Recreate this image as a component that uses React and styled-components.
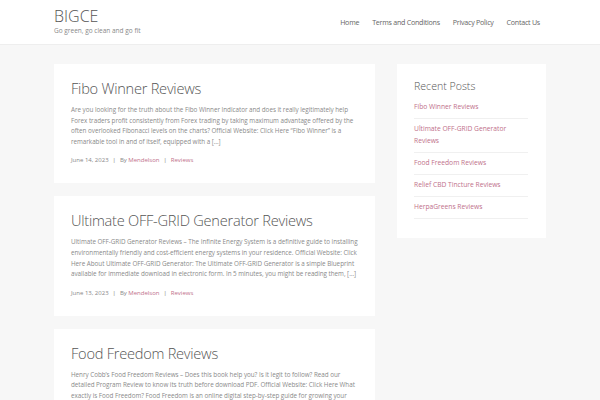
import React from "react";
import styled, { createGlobalStyle } from "styled-components";

const GlobalStyle = createGlobalStyle`
  body {
    margin: 0;
    background: #f7f7f7;
    font-family: "Open Sans", "Liberation Sans", sans-serif;
    color: #666;
  }
`;

const Header = styled.header`
  background: #fff;
  border-bottom: 1px solid #eee;
  height: 45px;
  box-sizing: border-box;
`;

const HeaderInner = styled.div`
  width: 492px;
  margin: 0 auto;
  padding-top: 6px;
  display: flex;
  justify-content: space-between;
  align-items: flex-start;
`;

const Brand = styled.div`
  display: flex;
  flex-direction: column;
`;

const SiteTitle = styled.div`
  font-size: 16px;
  font-weight: 300;
  color: #555;
  line-height: 20px;
`;

const Tagline = styled.div`
  font-size: 6.5px;
  color: #888;
  line-height: 9px;
`;

const Nav = styled.nav`
  display: flex;
  gap: 13px;
  margin-top: 11px;
  margin-right: 6px;
`;

const NavItem = styled.a`
  font-size: 7.1px;
  letter-spacing: -0.25px;
  color: #666;
  text-decoration: none;
`;

const Page = styled.div`
  width: 492px;
  margin: 19px auto 0;
  display: grid;
  grid-template-columns: 321px 149px;
  gap: 22px;
  align-items: start;
`;

const Posts = styled.div`
  display: flex;
  flex-direction: column;
  gap: 13px;
`;

const Card = styled.article`
  background: #fff;
  padding: 13px 17px 19px;
`;

const PostTitle = styled.h2`
  margin: 0 0 6px;
  font-size: 14.6px;
  font-weight: 300;
  letter-spacing: -0.25px;
  color: #555;
  line-height: 22px;
`;

const Excerpt = styled.p`
  margin: 0;
  font-size: 6.3px;
  letter-spacing: -0.03px;
  line-height: 10.6px;
  color: #8a8a8a;
`;

const Meta = styled.div`
  margin-top: 9px;
  font-size: 6px;
  color: #888;
  display: flex;
  gap: 3px;
  align-items: center;
`;

const Sep = styled.span`
  color: #777;
  margin: 0 1px;
`;

const PinkLink = styled.a`
  color: #c0708a;
  text-decoration: none;
`;

const Sidebar = styled.aside`
  background: #fff;
  padding: 14px 17px 19px;
`;

const WidgetTitle = styled.h3`
  margin: 0 0 3px;
  font-size: 10.6px;
  font-weight: 300;
  color: #555;
  line-height: 16px;
`;

const RecentList = styled.ul`
  list-style: none;
  margin: 0;
  padding: 0;
  width: 114px;
`;

const RecentItem = styled.li`
  border-bottom: 1px solid #f0f0f0;
  padding: 4px 0 5.5px;
  font-size: 6.7px;
  line-height: 11.5px;
`;

const posts = [
  {
    title: "Fibo Winner Reviews",
    text: "Are you looking for the truth about the Fibo Winner Indicator and does it really legitimately help Forex traders profit consistently from Forex trading by taking maximum advantage offered by the often overlooked Fibonacci levels on the charts? Official Website: Click Here \u201cFibo Winner\u201d is a remarkable tool in and of itself, equipped with a [\u2026]",
    date: "June 14, 2023",
  },
  {
    title: "Ultimate OFF-GRID Generator Reviews",
    text: "Ultimate OFF-GRID Generator Reviews \u2013 The Infinite Energy System is a definitive guide to installing environmentally friendly and cost-efficient energy systems in your residence. Official Website: Click Here About Ultimate OFF-GRID Generator: The Ultimate OFF-GRID Generator is a simple Blueprint available for immediate download in electronic form. In 5 minutes, you might be reading them, [\u2026]",
    date: "June 13, 2023",
  },
  {
    title: "Food Freedom Reviews",
    text: "Henry Cobb\u2019s Food Freedom Reviews \u2013 Does this book help you? Is it legit to follow? Read our detailed Program Review to know its truth before download PDF. Official Website: Click Here What exactly is Food Freedom? Food Freedom is an online digital step-by-step guide for growing your own food at home in any space, [\u2026]",
    date: "June 12, 2023",
  },
];

const recent = [
  "Fibo Winner Reviews",
  "Ultimate OFF-GRID Generator Reviews",
  "Food Freedom Reviews",
  "Relief CBD Tincture Reviews",
  "HerpaGreens Reviews",
];

export default function App() {
  return (
    <>
      <GlobalStyle />
      <Header>
        <HeaderInner>
          <Brand>
            <SiteTitle>BIGCE</SiteTitle>
            <Tagline>Go green, go clean and go fit</Tagline>
          </Brand>
          <Nav>
            <NavItem href="#">Home</NavItem>
            <NavItem href="#">Terms and Conditions</NavItem>
            <NavItem href="#">Privacy Policy</NavItem>
            <NavItem href="#">Contact Us</NavItem>
          </Nav>
        </HeaderInner>
      </Header>
      <Page>
        <Posts>
          {posts.map((p) => (
            <Card key={p.title}>
              <PostTitle>{p.title}</PostTitle>
              <Excerpt>{p.text}</Excerpt>
              <Meta>
                <span>{p.date}</span>
                <Sep>|</Sep>
                <span>
                  By <PinkLink href="#">Mendelson</PinkLink>
                </span>
                <Sep>|</Sep>
                <PinkLink href="#">Reviews</PinkLink>
              </Meta>
            </Card>
          ))}
        </Posts>
        <Sidebar>
          <WidgetTitle>Recent Posts</WidgetTitle>
          <RecentList>
            {recent.map((r) => (
              <RecentItem key={r}>
                <PinkLink href="#">{r}</PinkLink>
              </RecentItem>
            ))}
          </RecentList>
        </Sidebar>
      </Page>
    </>
  );
}
